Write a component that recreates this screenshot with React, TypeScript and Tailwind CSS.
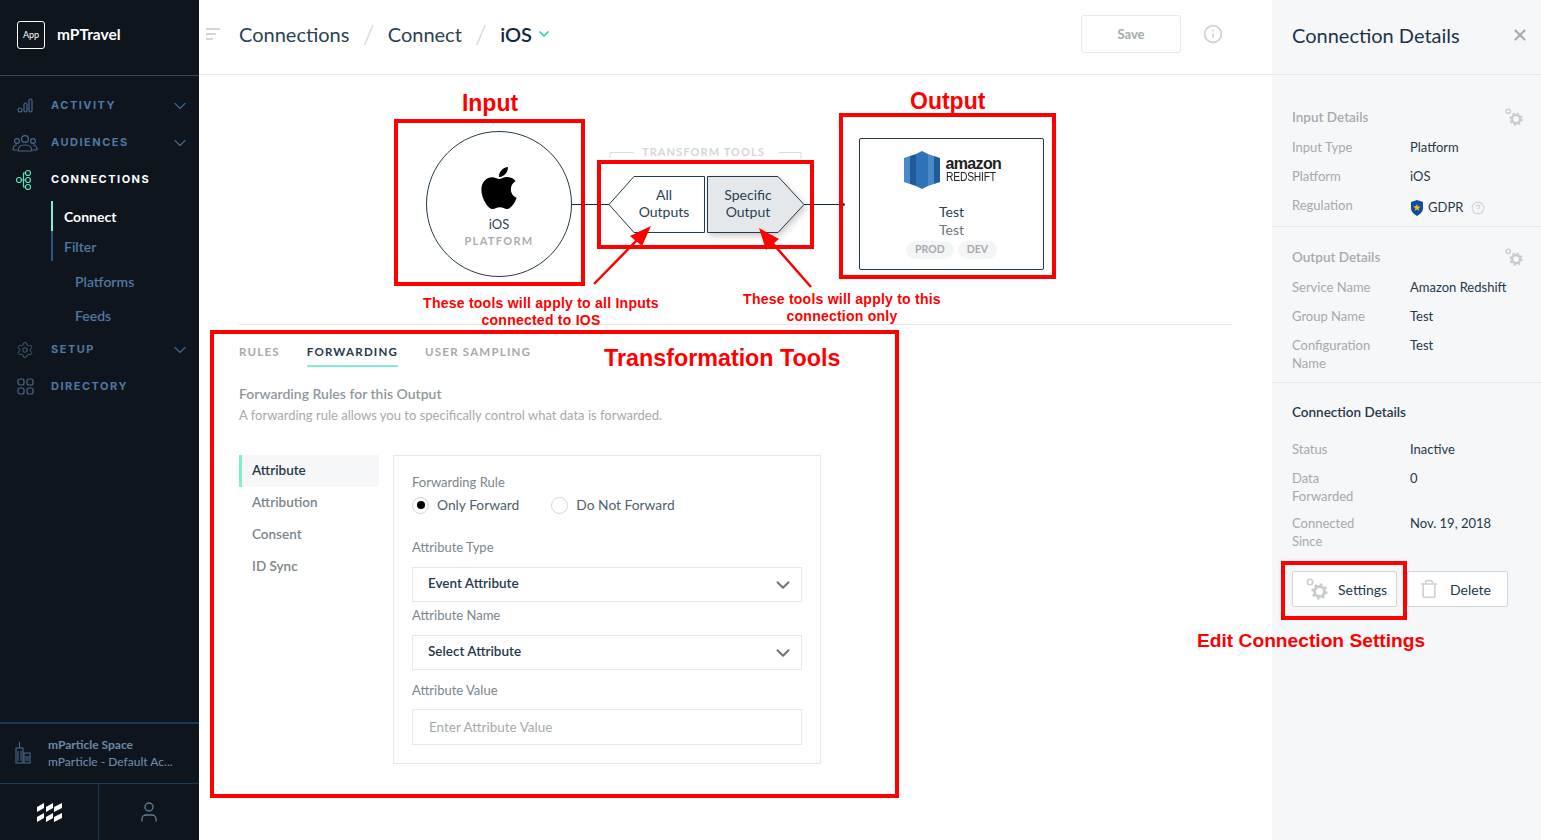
import { ChevronDown, Settings, Trash, User, X, Info, HelpCircle } from "lucide-react";
import { FaApple } from "react-icons/fa";

function NavIcon({ d, active }: { d: React.ReactNode; active?: boolean }) {
  return (
    <svg width="26" height="22" viewBox="0 0 26 22" fill="none" stroke={active ? "#5fe0b9" : "#47688a"} strokeWidth="1.2">
      {d}
    </svg>
  );
}

function Gears({ size = 18 }: { size?: number }) {
  return (
    <svg width={size} height={size} viewBox="0 0 22 22" fill="none" stroke="#c9cccf">
      <circle cx="4" cy="4" r="2.7" strokeWidth="1.6" />
      <circle cx="13.5" cy="13.5" r="5" strokeWidth="3" />
      <circle cx="13.5" cy="13.5" r="7" strokeWidth="2.4" strokeDasharray="2.6 2.9" />
    </svg>
  );
}

function NavRow({ label, icon, chevron, active }: { label: string; icon: React.ReactNode; chevron?: boolean; active?: boolean }) {
  return (
    <div className="h-[37px] flex items-center pl-[12px] pr-[9px]">
      <span className="w-[26px] flex justify-center">{icon}</span>
      <span className={`ml-[13px] flex-1 text-[11px] font-bold tracking-[1.5px] font-['Inter',sans-serif] ${active ? "text-white" : "text-[#4f79a3]"}`}>{label}</span>
      {chevron && <ChevronDown size={20} color="#3f6286" strokeWidth={1.6} />}
    </div>
  );
}

function Sidebar() {
  return (
    <aside className="w-[199px] shrink-0 h-full bg-[#0e151d] flex flex-col">
      <div className="h-[76px] shrink-0 border-b border-[#3a4755] flex items-center pl-[17px] pb-[6px]">
        <div className="w-[28px] h-[28px] border border-white rounded-[3px] flex items-center justify-center text-white text-[9px]">App</div>
        <span className="ml-[12px] text-white text-[15.5px] font-bold">mPTravel</span>
      </div>
      <div className="pt-[11px]">
        <NavRow label="ACTIVITY" chevron icon={<NavIcon d={<><circle cx="8" cy="15" r="2" /><rect x="12" y="8" width="3" height="9" rx="1.5" /><rect x="17" y="4" width="3" height="13" rx="1.5" /></>} />} />
        <NavRow label="AUDIENCES" chevron icon={<NavIcon d={<><circle cx="13" cy="7" r="3.4" /><circle cx="5" cy="9" r="2.4" /><circle cx="21" cy="9" r="2.4" /><path d="M6 19c0-5 3-6 7-6s7 1 7 6zM1 18c0-3 1-5 4-5M25 18c0-3-1-5-4-5M1 18h4M21 18h4" /></>} />} />
        <NavRow label="CONNECTIONS" active icon={<NavIcon active d={<><circle cx="7" cy="11" r="2.5" /><circle cx="16" cy="4" r="2.5" /><circle cx="16" cy="11" r="2.5" /><circle cx="16" cy="18" r="2.5" /><path d="M9.5 11h4M13.5 4h-2v14h2" /></>} />} />
      </div>
      <div className="ml-[51px] mt-[3px] border-l-2 border-[#2c5580] text-[14px]">
        <div className="h-[30px] -ml-[2px] border-l-2 border-[#7ff0cf] pl-[11px] flex items-center text-white font-bold">Connect</div>
        <div className="h-[30px] pl-[11px] flex items-center text-[#4f79a3] font-semibold">Filter</div>
      </div>
      <div className="pl-[75px] text-[14px] text-[#4f79a3] font-semibold">
        <div className="h-[34px] mt-[3px] flex items-center">Platforms</div>
        <div className="h-[34px] flex items-center">Feeds</div>
      </div>
      <div className="-mt-[1px]">
        <NavRow label="SETUP" chevron icon={<Settings size={18} color="#47688a" strokeWidth={1.2} />} />
      </div>
      <NavRow label="DIRECTORY" icon={<NavIcon d={<><rect x="6" y="3" width="6" height="6" rx="2" /><rect x="15" y="3" width="6" height="6" rx="2" /><rect x="6" y="12" width="6" height="6" rx="2" /><rect x="15" y="12" width="6" height="6" rx="2" /></>} />} />
      <div className="mt-auto border-t-2 border-[#173a5c]">
        <div className="h-[59px] flex items-center pl-[15px] pb-[2px]">
          <svg width="17" height="23" viewBox="0 0 17 23" fill="none" stroke="#47688a" strokeWidth="1.1">
            <rect x="1" y="7" width="7" height="15" />
            <rect x="9" y="12" width="6" height="10" />
            <path d="M4.5 1v6M3 10v10M6 10v10M11 15v5M13 15v5" />
          </svg>
          <div className="ml-[16px] text-[12px] leading-[17px] text-[#6b8aa6]">
            <div className="font-bold">mParticle Space</div>
            <div className="font-medium">mParticle - Default Ac...</div>
          </div>
        </div>
        <div className="h-[57px] border-t border-[#173a5c] flex mx-0">
          <div className="w-[99px] border-r border-[#173a5c] flex items-center justify-center">
            <svg width="25" height="20" viewBox="0 0 25 20" fill="white">
              <path d="M0 5l7-4v5L0 10zM9 5l7-4v5L9 10zM17 5l8-4v5l-8 4zM0 15l7-4v5l-7 4zM9 15l7-4v5l-7 4zM17 15l8-4v5l-8 4z" />
            </svg>
          </div>
          <div className="flex-1 flex items-center justify-center">
            <User size={24} color="#5c7a96" strokeWidth={1.4} />
          </div>
        </div>
      </div>
    </aside>
  );
}

function Header() {
  return (
    <div className="h-[75px] shrink-0 border-b border-[#e6e8ea] flex items-center pl-[7px] pr-[49px] pb-[6px] text-[#2b4154] text-[20px]">
      <div className="flex flex-col gap-[3px] w-[14px]">
        <span className="h-[2px] w-[14px] bg-[#d3d6d9]"></span>
        <span className="h-[2px] w-[10px] bg-[#d3d6d9]"></span>
        <span className="h-[2px] w-[7px] bg-[#d3d6d9]"></span>
      </div>
      <span className="ml-[19px]">Connections</span>
      <span className="mx-[13.5px] text-[#c9cccf] text-[26px] font-light">/</span>
      <span>Connect</span>
      <span className="mx-[13.5px] text-[#c9cccf] text-[26px] font-light">/</span>
      <span className="font-semibold text-[#12293b]">iOS</span>
      <ChevronDown size={16} color="#2bd3a5" strokeWidth={2.6} className="ml-[4px]" />
      <div className="ml-auto flex items-center">
        <div className="w-[100px] h-[38px] border border-[#e6e8ea] rounded-[3px] pt-[1px] flex items-center justify-center text-[13px] font-bold text-[#a5aaad]">Save</div>
        <Info size={20} color="#cfd2d5" className="ml-[22px]" />
      </div>
    </div>
  );
}

function Diagram() {
  return (
    <>
      <div className="relative h-[249px] shrink-0 text-[#2b4154]">
        <svg className="absolute left-0 top-0" width="1033" height="249" fill="none">
          <path d="M373 129.5h38M605 129.5h41M640 124.5l6 5-6 5" stroke="#12293b" strokeWidth="1" />
          <path d="M410 129.5L435 101.5H505.500V157.500H435Z" fill="white" stroke="#24394a" strokeWidth="1" />
          <path d="M508.500 101.500H579L605 129.500L579 157.500H508.500Z" fill="#e4e8eb" stroke="#24394a" strokeWidth="1" className="drop-shadow-[2px_3px_3px_rgba(0,0,0,0.2)]" />
          <path d="M411 83V77.500h24M580 77.500h22v6" stroke="#d8dbde" strokeWidth="1" />
        </svg>
        <div className="absolute left-[443px] top-[69px] text-[11px] font-bold tracking-[1.1px] text-[#d3d6d9]">TRANSFORM TOOLS</div>

        <div className="absolute left-[227px] top-[56px] w-[146px] h-[146px] rounded-full border border-[#24394a] flex flex-col items-center pt-[32px]">
          <FaApple size={48} color="#000" />
          <div className="text-[13px] leading-[17px] mt-[4px]">iOS</div>
          <div className="text-[11px] font-bold tracking-[0.12em] text-[#a9adb0] leading-[16px]">PLATFORM</div>
        </div>

        <div className="absolute left-[432px] top-[111px] w-[66px] text-center text-[14px] leading-[17px]">All<br />Outputs</div>
        <div className="absolute left-[510px] top-[111px] w-[78px] text-center text-[14px] leading-[17px]">Specific<br />Output</div>

        <div className="absolute left-[660px] top-[63px] w-[185px] h-[132px] border border-[#24394a] rounded-[2px] flex flex-col items-center">
          <div className="flex items-center mt-[12px] ml-[4px]">
            <svg width="36" height="38" viewBox="0 0 36 38">
              <path d="M0 7l6-2v28l-6-2z" fill="#4a8ac6" />
              <path d="M36 7l-6-2v28l6-2z" fill="#205b99" />
              <path d="M6 5l6-2v32l-6-2z" fill="#205b99" />
              <path d="M30 5l-6-2v32l6-2z" fill="#4a8ac6" />
              <path d="M12 3l6-3 6 3v32l-6 3-6-3z" fill="#2e73b8" />
            </svg>
            <div className="ml-[6px] w-[58px] text-[#222] font-['Liberation_Sans',sans-serif]">
              <div className="text-[16px] font-bold leading-[14px] tracking-[-0.04em]">amazon</div>
              <div className="text-[12px] leading-[13px] tracking-[-0.02em] scale-x-[0.86] origin-left">REDSHIFT</div>
            </div>
          </div>
          <div className="text-[14px] leading-[18px] mt-[14px]">Test</div>
          <div className="text-[14px] leading-[18px] text-[#6b757c]">Test</div>
          <div className="flex gap-[4px] mt-[2px]">
            <span className="h-[18px] px-[9px] rounded-full bg-[#f4f5f6] text-[10.5px] font-bold text-[#a5aaad] flex items-center">PROD</span>
            <span className="h-[18px] px-[9px] rounded-full bg-[#f4f5f6] text-[10.5px] font-bold text-[#a5aaad] flex items-center">DEV</span>
          </div>
        </div>
      </div>
      <div className="h-px shrink-0 ml-[40px] mr-[40px] bg-[#e6e8ea]"></div>
    </>
  );
}

function Field({ label, value, placeholder }: { label: string; value?: string; placeholder?: string }) {
  return (
    <div>
      <div className="text-[13px] leading-[18px] text-[#7b858c]">{label}</div>
      {value ? (
        <div className="mt-[11px] h-[35px] border border-[#e6e8ea] flex items-center pl-[15px] pr-[7px] pb-[2px] text-[13.5px]">
          <span className="font-semibold text-[#24394a]">{value}</span>
          <ChevronDown size={22} color="#6b757c" strokeWidth={2.2} className="ml-auto mt-[2px]" />
        </div>
      ) : (
        <div className="mt-[10px] h-[36px] border border-[#e6e8ea] flex items-center pl-[16px] text-[13.5px] text-[#a5aaad]">{placeholder}</div>
      )}
    </div>
  );
}

function Transform() {
  return (
    <div className="pl-[40px] pt-[18px] flex-1">
      <div className="flex gap-[27px] text-[11.5px] font-bold tracking-[0.105em] text-[#a5aaad]">
        <span className="h-[24px]">RULES</span>
        <span className="h-[24px] text-[#24394a] border-b-2 border-[#7ff0cf]">FORWARDING</span>
        <span className="h-[24px]">USER SAMPLING</span>
      </div>
      <div className="mt-[18px] text-[14px] leading-[18px] font-semibold text-[#8f979c]">Forwarding Rules for this Output</div>
      <div className="mt-[3px] text-[13px] leading-[18px] text-[#a5aaad]">A forwarding rule allows you to specifically control what data is forwarded.</div>
      <div className="mt-[31px] flex">
        <div className="w-[140px] text-[13.5px] font-semibold text-[#7b858c]">
          <div className="h-[32px] pb-[2px] bg-[#f6f7f9] border-l-[3px] border-[#7ff0cf] pl-[10px] flex items-center text-[#24394a]">Attribute</div>
          <div className="h-[32px] pb-[2px] pl-[13px] flex items-center">Attribution</div>
          <div className="h-[32px] pb-[2px] pl-[13px] flex items-center">Consent</div>
          <div className="h-[32px] pb-[2px] pl-[13px] flex items-center">ID Sync</div>
        </div>
        <div className="ml-[14px] w-[428px] h-[309px] border border-[#e6e8ea] pl-[18px] pr-[18px] pt-[17px]">
          <div className="text-[13px] leading-[18px] text-[#7b858c]">Forwarding Rule</div>
          <div className="flex items-center mt-[5px] h-[18px] text-[13.8px] text-[#4d5f6d]">
            <span className="w-[17px] h-[17px] rounded-full border border-[#d3d6d9] flex items-center justify-center">
              <span className="w-[8px] h-[8px] rounded-full bg-black"></span>
            </span>
            <span className="ml-[8px]">Only Forward</span>
            <span className="ml-[32px] w-[17px] h-[17px] rounded-full border border-[#d3d6d9]"></span>
            <span className="ml-[8px]">Do Not Forward</span>
          </div>
          <div className="mt-[24px]"><Field label="Attribute Type" value="Event Attribute" /></div>
          <div className="mt-[4px]"><Field label="Attribute Name" value="Select Attribute" /></div>
          <div className="mt-[11px]"><Field label="Attribute Value" placeholder="Enter Attribute Value" /></div>
        </div>
      </div>
    </div>
  );
}

function Row({ k, v, h = 29 }: { k: React.ReactNode; v: React.ReactNode; h?: number }) {
  return (
    <div className="flex text-[13px] leading-[18px]" style={{ minHeight: h }}>
      <div className="w-[118px] text-[#a5aaad]">{k}</div>
      <div className="flex-1 text-[#24394a]">{v}</div>
    </div>
  );
}

function Panel() {
  return (
    <aside className="w-[269px] shrink-0 h-full bg-[#f6f7f9]">
      <div className="h-[75px] border-b border-[#e6e8ea] flex items-center pl-[20px] pr-[12px] pb-[4px] text-[20px] text-[#1d3447]">
        <span>Connection Details</span>
        <X size={18} color="#a9adb0" strokeWidth={3} className="ml-auto" />
      </div>
      <div className="pl-[20px] pr-[18px] pt-[32px] h-[152px] border-b border-[#e6e8ea]">
        <div className="flex items-center justify-between h-[20px]">
          <span className="text-[13.5px] font-semibold text-[#a5aaad]">Input Details</span>
          <Gears />
        </div>
        <div className="mt-[11px]">
          <Row k="Input Type" v="Platform" />
          <Row k="Platform" v="iOS" />
          <Row k="Regulation" v={
            <span className="flex items-center mt-[2px]">
              <svg width="14" height="16" viewBox="0 0 14 16" className="mt-[2px]">
                <path d="M7 0l6 2v6c0 4-3 6-6 8-3-2-6-4-6-8V2z" fill="#0d4f9e" />
                <path d="M7 4l1 2.4 2.6.2-2 1.6.7 2.6L7 9.4l-2.3 1.4.7-2.6-2-1.6L6 6z" fill="#f3b52a" />
              </svg>
              <span className="ml-[4px]">GDPR</span>
              <HelpCircle size={14} color="#cfd2d5" className="ml-[8px] mt-[2px]" />
            </span>
          } />
        </div>
      </div>
      <div className="pl-[20px] pr-[18px] pt-[20px] h-[156px] border-b border-[#e6e8ea]">
        <div className="flex items-center justify-between h-[20px]">
          <span className="text-[13.5px] font-semibold text-[#a5aaad]">Output Details</span>
          <Gears />
        </div>
        <div className="mt-[11px]">
          <Row k="Service Name" v="Amazon Redshift" />
          <Row k="Group Name" v="Test" />
          <Row k={<>Configuration<br />Name</>} v="Test" />
        </div>
      </div>
      <div className="px-[20px] pt-[20px]">
        <div className="text-[13.5px] leading-[18px] font-semibold text-[#24394a]">Connection Details</div>
        <div className="mt-[19px]">
          <Row k="Status" v="Inactive" />
          <Row k={<>Data<br />Forwarded</>} v="0" h={45} />
          <Row k={<>Connected<br />Since</>} v="Nov. 19, 2018" h={48} />
        </div>
        <div className="mt-[9px] flex gap-[10px] text-[14px] text-[#24394a]">
          <div className="w-[105px] h-[36px] bg-white border border-[#d3d6d9] rounded-[2px] flex items-center pl-[13px]">
            <Gears size={22} />
            <span className="ml-[10px]">Settings</span>
          </div>
          <div className="w-[101px] h-[36px] bg-white border border-[#d3d6d9] rounded-[2px] flex items-center pl-[11px]">
            <Trash size={20} color="#cfd2d5" strokeWidth={2} />
            <span className="ml-[11px]">Delete</span>
          </div>
        </div>
      </div>
    </aside>
  );
}

// red markup drawn on top of the screenshot
function Annotations() {
  const bold = "absolute font-['Liberation_Sans',sans-serif] font-bold text-[#ff0000]";
  return (
    <>
      <div className="absolute left-[394px] top-[119px] w-[191px] h-[167px] border-4 border-[#ff0000]"></div>
      <div className="absolute left-[597px] top-[160px] w-[217px] h-[89px] border-4 border-[#ff0000]"></div>
      <div className="absolute left-[839px] top-[113px] w-[217px] h-[166px] border-4 border-[#ff0000]"></div>
      <div className="absolute left-[210px] top-[330px] w-[689px] h-[468px] border-4 border-[#ff0000]"></div>
      <div className="absolute left-[1281px] top-[561px] w-[126px] h-[59px] border-4 border-[#ff0000]"></div>
      <svg className="absolute left-0 top-0 pointer-events-none" width="1541" height="840" fill="#ff0000" stroke="none">
        <path d="M594 284L642 235" stroke="#ff0000" strokeWidth="2.5" />
        <path d="M651 226L630 236L642 246Z" />
        <path d="M811 287L768 238" stroke="#ff0000" strokeWidth="2.5" />
        <path d="M759 228L766 250L779 239Z" />
      </svg>
      <div className={`${bold} left-[410px] top-[89px] w-[160px] text-center text-[23px] leading-[28px]`}>Input</div>
      <div className={`${bold} left-[910px] top-[87px] text-[23px] leading-[28px]`}>Output</div>
      <div className={`${bold} left-[410px] top-[295px] w-[262px] text-center text-[14px] leading-[17px] tracking-[0.24px]`}>These tools will apply to all Inputs<br />connected to IOS</div>
      <div className={`${bold} left-[731px] top-[291px] w-[222px] text-center text-[14px] leading-[17px] tracking-[0.24px]`}>These tools will apply to this<br />connection only</div>
      <div className={`${bold} left-[604px] top-[344px] text-[23.3px] leading-[28px]`}>Transformation Tools</div>
      <div className={`${bold} left-[1197px] top-[629px] text-[19.2px] leading-[24px]`}>Edit Connection Settings</div>
    </>
  );
}

export default function App() {
  return (
    <div className="relative w-[1541px] h-[840px] overflow-hidden flex bg-white font-['Lato',sans-serif]">
      <Sidebar />
      <main className="flex-1 min-w-0 h-full flex flex-col">
        <Header />
        <Diagram />
        <Transform />
      </main>
      <Panel />
      <Annotations />
    </div>
  );
}
